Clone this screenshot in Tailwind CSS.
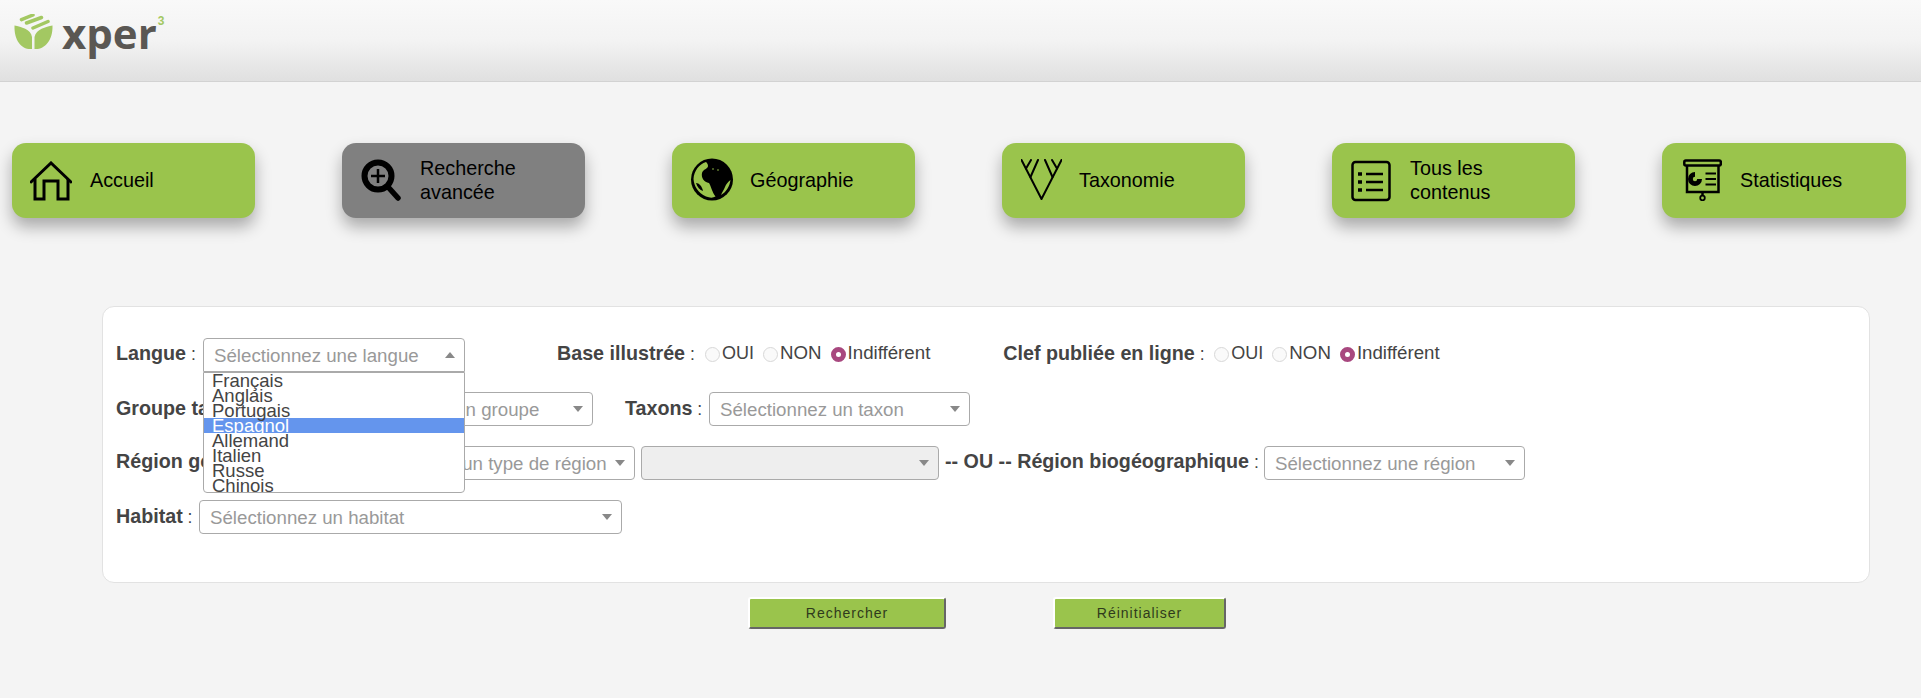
<!DOCTYPE html>
<html lang="fr">
<head>
    <meta charset="UTF-8">
    <title>Xper3</title>
    <script src="https://cdn.jsdelivr.net/npm/@tailwindcss/browser@4"></script>
</head>
<body class="h-[698px] overflow-hidden bg-[#f4f4f4] font-['Liberation_Sans',Arial,sans-serif] text-[#444]">
    <!-- Header -->
    <header class="relative h-[82px] border-b border-[#d2d2d2] bg-gradient-to-b from-[#f9f9f9] via-[#f3f3f3] to-[#e0e0e0] pl-[14px] pt-[14px]">
        <div class="flex items-start">
            <svg class="w-[40px] h-[37px]" viewBox="0 0 40 37">
                <path fill="#a3c862" d="M0.500 11.500 C7 13 17 15 18 23 L18 35 C8 36 0 27 0.500 11.500Z"/>
                <path fill="#a3c862" d="M38.500 11.500 C32 13 22 15 20.500 23 L20.500 35 C30 36 39 27 38.500 11.500Z"/>
                <path fill="none" stroke="#a3c862" stroke-width="3.500" stroke-linecap="round" d="M7.500 5.700 L19 1 M12.500 9 L27.500 3.500 M19 14 L34 7.500"/>
            </svg>
            <span class="ml-[8px] -mt-[9px] text-[42px] leading-[56px] font-bold font-['Open_Sans',sans-serif] text-[#5a5753]">xper</span>
            <span class="ml-[1px] mt-[1px] text-[12px] leading-[12px] font-bold text-[#a3c862]">3</span>
        </div>
    </header>

    <!-- Navigation -->
    <nav class="flex justify-between pl-[12px] pr-[15px] mt-[61px] text-black text-[19.800px] leading-[24px]">
        <a class="flex items-center w-[243px] h-[75px] rounded-[14px] bg-[#9ac44c] shadow-[0_9px_16px_rgba(0,0,0,0.3)]">
            <svg class="ml-[18px] w-[42px] h-[40px]" viewBox="0 0 42 40" fill="none" stroke="black" stroke-width="3">
                <path d="M1 21 L21 2 L41 21" stroke-linejoin="miter" stroke-linecap="round"/>
                <path d="M5 18 V38 H14 V20 H28 V38 H38 V18"/>
            </svg>
            <span class="ml-[18px] -mt-[1px]">Accueil</span>
        </a>
        <a class="flex items-center w-[243px] h-[75px] rounded-[14px] bg-[#808080] shadow-[0_9px_16px_rgba(0,0,0,0.3)]">
            <svg class="ml-[19px] w-[40px] h-[48px]" viewBox="0 0 40 48" fill="none" stroke="black">
                <circle cx="17" cy="19" r="13.500" stroke-width="6"/>
                <path d="M17 12 V26 M10 19 H24" stroke-width="2.500"/>
                <path d="M28 31 L37 41" stroke-width="5.500" stroke-linecap="round"/>
            </svg>
            <span class="ml-[19px] w-[120px] -mt-[1px]">Recherche avancée</span>
        </a>
        <a class="flex items-center w-[243px] h-[75px] rounded-[14px] bg-[#9ac44c] shadow-[0_9px_16px_rgba(0,0,0,0.3)]">
            <svg class="ml-[18px] w-[44px] h-[43px] -mt-[3px]" viewBox="0 0 44 43">
                <circle cx="22" cy="21.500" r="21"/>
                <path fill="#9ac44c" d="M16 4 C9 6 4 13 3.500 21 C4 28 8 35 16 38.500 C20 40 23 40 25.500 38.500 C22 34 21 28 19 25 C14 24 11 20 12 15 C13 11 18 11 18 8 C18 6 17 5 16 4Z"/>
                <path d="M6 25 C9 25 12 28 13 33 C10 32 7 29 6 25Z"/>
                <path fill="#9ac44c" d="M31 37 C36 34 39.500 29 40.500 22 C38 24 36 26 35 29 C34 32 32 34 31 37Z"/>
                <circle cx="23" cy="11" r="0.800" fill="#9ac44c"/>
                <circle cx="28" cy="12" r="0.800" fill="#9ac44c"/>
            </svg>
            <span class="ml-[16px] -mt-[1px]">Géographie</span>
        </a>
        <a class="flex items-center w-[243px] h-[75px] rounded-[14px] bg-[#9ac44c] shadow-[0_9px_16px_rgba(0,0,0,0.3)]">
            <svg class="ml-[19px] w-[41px] h-[41px] -mt-[3px]" viewBox="0 0 41 41" fill="none" stroke="black" stroke-width="2" stroke-linecap="round">
                <path d="M0.500 1 L20.500 40 L40.500 1"/>
                <path d="M5 9.500 L10 1 M9.500 18 L17 1 M31.500 18 L24 1 M36 9.500 L31 1"/>
            </svg>
            <span class="ml-[17px] -mt-[1px]">Taxonomie</span>
        </a>
        <a class="flex items-center w-[243px] h-[75px] rounded-[14px] bg-[#9ac44c] shadow-[0_9px_16px_rgba(0,0,0,0.3)]">
            <svg class="ml-[19px] w-[40px] h-[44px]" viewBox="0 0 40 44" fill="none" stroke="black">
                <rect x="1.500" y="3" width="37" height="38" rx="3" stroke-width="2.500"/>
                <path d="M15 15 H32 M15 23 H32 M15 31 H32" stroke-width="2.500"/>
                <path d="M7 15 H11 M7 23 H11 M7 31 H11" stroke-width="3.500"/>
            </svg>
            <span class="ml-[19px] w-[110px] -mt-[1px]">Tous les contenus</span>
        </a>
        <a class="flex items-center w-[244px] h-[75px] rounded-[14px] bg-[#9ac44c] shadow-[0_9px_16px_rgba(0,0,0,0.3)]">
            <svg class="ml-[21px] w-[39px] h-[42px] -mt-[2px]" viewBox="0 0 39 42" fill="none" stroke="black" stroke-width="2.500">
                <rect x="1.300" y="1.500" width="36.500" height="5" rx="1.500"/>
                <path d="M4 6.500 V33 H35.500 V6.500"/>
                <path d="M19.500 33 V37"/>
                <circle cx="19.500" cy="39" r="2.300" stroke-width="1.800"/>
                <path fill="black" stroke="none" d="M12 13 A7 7 0 1 0 19 20 L12 20 Z"/>
                <circle cx="12" cy="20" r="2.200" fill="#9ac44c" stroke="none"/>
                <path d="M22.500 14.500 H33 M22.500 20 H33 M22.500 25.500 H33" stroke-width="2.200"/>
            </svg>
            <span class="ml-[18px] -mt-[1px]">Statistiques</span>
        </a>
    </nav>

    <!-- Search form -->
    <section class="relative ml-[102px] mt-[88px] w-[1768px] h-[277px] rounded-[12px] border border-[#e2e2e2] bg-white pl-[13px] pt-[31px] text-[18.700px]">
        <div class="flex items-center h-[34px]">
            <span class="w-[87px] shrink-0 -mt-[2px] whitespace-nowrap text-[17.600px]"><b class="text-[19.700px]">Langue</b> :</span>
            <div class="relative flex items-center justify-between w-[262px] h-[34px] rounded-[4px] rounded-b-none border border-[#aaa] pl-[10px] pr-[9px] text-[#999]">
                <span class="pt-[3px]">Sélectionnez une langue</span>
                <i class="w-0 h-0 border-x-[5px] border-x-transparent border-b-[6px] border-b-[#888]"></i>
            </div>
            <span class="ml-[92px] w-[148px] shrink-0 -mt-[2px] whitespace-nowrap text-[17.600px]"><b class="text-[19.700px]">Base illustrée</b> :</span>
            <div class="flex items-center -mt-[3px] text-[18.700px] text-[#444]">
                <i class="mt-[3px] w-[15px] h-[15px] rounded-full border border-[#d8d8d8] bg-[#fafafa]"></i><span class="ml-[2px] text-[18px]">OUI</span>
                <i class="ml-[9px] mt-[3px] w-[15px] h-[15px] rounded-full border border-[#d8d8d8] bg-[#fafafa]"></i><span class="ml-[2px]">NON</span>
                <i class="ml-[9px] mt-[3px] w-[15px] h-[15px] rounded-full border-[5px] border-[#a8487f] bg-white"></i><span class="ml-[2px]">Indifférent</span>
            </div>
            <span class="ml-[73px] w-[211px] shrink-0 -mt-[2px] whitespace-nowrap text-[17.600px]"><b class="text-[19.700px]">Clef publiée en ligne</b> :</span>
            <div class="flex items-center -mt-[3px] text-[18.700px] text-[#444]">
                <i class="mt-[3px] w-[15px] h-[15px] rounded-full border border-[#d8d8d8] bg-[#fafafa]"></i><span class="ml-[2px] text-[18px]">OUI</span>
                <i class="ml-[9px] mt-[3px] w-[15px] h-[15px] rounded-full border border-[#d8d8d8] bg-[#fafafa]"></i><span class="ml-[2px]">NON</span>
                <i class="ml-[9px] mt-[3px] w-[15px] h-[15px] rounded-full border-[5px] border-[#a8487f] bg-white"></i><span class="ml-[2px]">Indifférent</span>
            </div>
        </div>

        <div class="flex items-center h-[34px] mt-[20px]">
            <span class="w-[216px] shrink-0 whitespace-nowrap text-[17.600px]"><b class="text-[19.700px]">Groupe taxonomique</b> :</span>
            <div class="flex items-center justify-between w-[261px] h-[34px] rounded-[4px] border border-[#aaa] pl-[10px] pr-[9px] text-[#999]">
                <span class="pt-[3px]">Sélectionnez un groupe</span>
                <i class="w-0 h-0 border-x-[5px] border-x-transparent border-t-[6px] border-t-[#888]"></i>
            </div>
            <span class="ml-[32px] w-[84px] shrink-0 whitespace-nowrap text-[17.600px]"><b class="text-[19.700px]">Taxons</b> :</span>
            <div class="flex items-center justify-between w-[261px] h-[34px] rounded-[4px] border border-[#aaa] pl-[10px] pr-[9px] text-[#999]">
                <span class="pt-[3px]">Sélectionnez un taxon</span>
                <i class="w-0 h-0 border-x-[5px] border-x-transparent border-t-[6px] border-t-[#888]"></i>
            </div>
        </div>

        <div class="flex items-center h-[34px] mt-[20px]">
            <span class="w-[223px] shrink-0 -mt-[2px] whitespace-nowrap text-[17.600px]"><b class="text-[19.700px]">Région géographique</b> :</span>
            <div class="flex items-center justify-between w-[296px] h-[34px] rounded-[4px] border border-[#aaa] pl-[10px] pr-[9px] text-[#999]">
                <span class="pt-[3px] whitespace-nowrap">Sélectionnez un type de région</span>
                <i class="shrink-0 w-0 h-0 border-x-[5px] border-x-transparent border-t-[6px] border-t-[#888]"></i>
            </div>
            <div class="flex items-center justify-end ml-[6px] w-[298px] h-[34px] rounded-[4px] border border-[#aaa] bg-[#eee] pr-[9px]">
                <i class="w-0 h-0 border-x-[5px] border-x-transparent border-t-[6px] border-t-[#888]"></i>
            </div>
            <span class="ml-[6px] w-[319px] shrink-0 -mt-[2px] whitespace-nowrap text-[17.600px]"><b class="text-[19.700px]">-- OU -- Région biogéographique</b> :</span>
            <div class="flex items-center justify-between w-[261px] h-[34px] rounded-[4px] border border-[#aaa] pl-[10px] pr-[9px] text-[#999]">
                <span class="pt-[3px]">Sélectionnez une région</span>
                <i class="w-0 h-0 border-x-[5px] border-x-transparent border-t-[6px] border-t-[#888]"></i>
            </div>
        </div>

        <div class="flex items-center h-[34px] mt-[20px]">
            <span class="w-[83px] shrink-0 -mt-[1px] whitespace-nowrap text-[17.600px]"><b class="text-[19.700px]">Habitat</b> :</span>
            <div class="flex items-center justify-between w-[423px] h-[34px] rounded-[4px] border border-[#aaa] pl-[10px] pr-[9px] text-[#999]">
                <span class="pt-[2px]">Sélectionnez un habitat</span>
                <i class="w-0 h-0 border-x-[5px] border-x-transparent border-t-[6px] border-t-[#888]"></i>
            </div>
        </div>

        <!-- Open language list -->
        <ul class="absolute left-[100px] top-[65px] w-[262px] h-[121px] rounded-b-[4px] border border-[#aaa] bg-white text-[18.500px] leading-[15px] text-[#444] overflow-hidden">
            <li class="h-[15px] pl-[8px]">Français</li>
            <li class="h-[15px] pl-[8px]">Anglais</li>
            <li class="h-[15px] pl-[8px]">Portugais</li>
            <li class="h-[15px] pl-[8px] bg-[#6495ed] text-white">Espagnol</li>
            <li class="h-[15px] pl-[8px]">Allemand</li>
            <li class="h-[15px] pl-[8px]">Italien</li>
            <li class="h-[15px] pl-[8px]">Russe</li>
            <li class="h-[15px] pl-[8px]">Chinois</li>
        </ul>
    </section>

    <!-- Buttons -->
    <div class="flex ml-[748px] mt-[14px] text-[14px] tracking-[1px] text-[#2f3a1c]">
        <button class="w-[198px] h-[32px] rounded-[3px] border-2 border-white border-r-[#666] border-b-[#666] bg-[#9ac44c]">Rechercher</button>
        <button class="ml-[107px] w-[173px] h-[32px] rounded-[3px] border-2 border-white border-r-[#666] border-b-[#666] bg-[#9ac44c]">Réinitialiser</button>
    </div>
</body>
</html>
